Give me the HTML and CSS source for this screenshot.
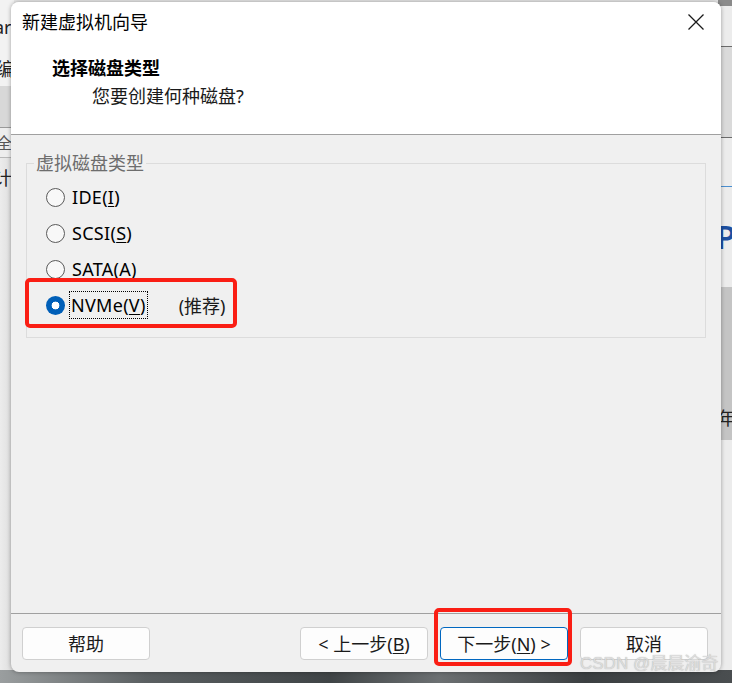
FILE: index.html
```html
<!DOCTYPE html>
<html lang="zh-CN">
<head>
<meta charset="utf-8">
<title>新建虚拟机向导</title>
<link rel="stylesheet" href="styles.css">
</head>
<body>
<div class="desktop">
  <div class="bg-left">
    <div class="bl-top">
      <span class="bl-t1">ar</span>
      <span class="bl-t2">编</span>
    </div>
    <div class="bl-band"></div>
    <div class="bl-row"><span>全</span></div>
    <div class="bl-row2"><span>计</span></div>
  </div>
  <div class="bg-right">
    <div class="br-top"></div>
    <div class="br-lines"></div>
    <div class="br-blue"></div>
    <div class="br-pc">PC</div>
    <div class="br-gray"><span>年</span></div>
  </div>
  <div class="bg-bottom"></div>

  <div class="dialog">
    <div class="header">
      <div class="titlebar">
        <span class="title">新建虚拟机向导</span>
        <svg class="close" width="16" height="16" viewBox="0 0 16 16"><path d="M0.5 0.5 L15.5 15.5 M15.5 0.5 L0.5 15.5" stroke="#1a1a1a" stroke-width="1.3" fill="none"/></svg>
      </div>
      <div class="heading">选择磁盘类型</div>
      <div class="subheading">您要创建何种磁盘?</div>
    </div>
    <div class="body">
      <fieldset class="group">
        <legend>虚拟磁盘类型</legend>
        <div class="radio"><span class="dot"></span><span class="lbl">IDE(<u>I</u>)</span></div>
        <div class="radio"><span class="dot"></span><span class="lbl">SCSI(<u>S</u>)</span></div>
        <div class="radio"><span class="dot"></span><span class="lbl">SATA(<u>A</u>)</span></div>
        <div class="radio checked"><span class="dot"></span><span class="lbl focus">NVMe(<u>V</u>)</span><span class="rec">(推荐)</span></div>
      </fieldset>
    </div>
    <div class="footer">
      <div class="btn">帮助</div>
      <div class="spacer"></div>
      <div class="btn">&lt; 上一步(<u>B</u>)</div>
      <div class="btn primary">下一步(<u>N</u>) &gt;</div>
      <div class="btn">取消</div>
    </div>
  </div>

  <div class="mark mark-nvme"></div>
  <div class="mark mark-next"></div>
  <div class="watermark">CSDN @晨晨渝奇</div>
</div>
</body>
</html>
```

FILE: styles.css
```css
* { box-sizing: border-box; }
html, body { margin: 0; padding: 0; }
body {
  width: 732px;
  height: 683px;
  overflow: hidden;
  font-family: "Noto Sans", "Noto Sans CJK SC", sans-serif;
  font-size: 18px;
  color: #000;
}
.desktop {
  position: relative;
  width: 732px;
  height: 683px;
  background: #e6e6e6;
  overflow: hidden;
}

/* background app, left strip */
.bg-left {
  position: absolute;
  left: 0; top: 0;
  width: 14px; height: 672px;
  background: linear-gradient(to right, #ececec, #dcdcdc);
  display: flex;
  flex-direction: column;
  overflow: hidden;
}
.bl-top {
  height: 86px;
  background: #f2f2f2;
  display: flex;
  flex-direction: column;
  font-size: 18px;
  line-height: 22px;
}
.bl-t1 { margin-top: 16px; margin-left: -6px; color: #222; }
.bl-t2 { margin-top: 20px; margin-left: -4px; color: #222; }
.bl-band { height: 42px; background: #d8d8d8; border-bottom: 1px solid #9a9a9a; }
.bl-row {
  height: 30px;
  border-bottom: 1px solid #b8b8b8;
  background: #ededed;
  font-size: 16px;
  line-height: 30px;
  color: #555;
}
.bl-row span { margin-left: -4px; }
.bl-row2 {
  height: 40px;
  font-size: 18px;
  line-height: 40px;
  color: #222;
}
.bl-row2 span { margin-left: -6px; }

/* right strip */
.bg-right {
  position: absolute;
  left: 718px; top: 0;
  width: 14px; height: 672px;
  background: #ececec;
  overflow: hidden;
}
.br-top { height: 6px; background: #8a8a8a; }
.br-lines {
  height: 92px;
  margin-top: 40px;
  border-top: 1px solid #6b6b6b;
  border-bottom: 1px solid #6b6b6b;
  background: #dadada;
}
.br-blue { height: 1px; background: #4a8fd0; margin-top: 48px; }
.br-pc {
  margin-top: 32px;
  font-size: 32px;
  line-height: 36px;
  color: #1d4fa0;
  margin-left: -2px;
  font-weight: 600;
}
.br-gray {
  margin-top: 32px;
  height: 153px;
  background: #c4c4c4;
  font-size: 18px;
  line-height: 22px;
  padding-top: 120px;
  color: #222;
}
.bg-bottom {
  position: absolute;
  left: 0; top: 670px;
  width: 732px; height: 13px;
  background: linear-gradient(to right, #9a9e9f 0%, #5a5f61 20%, #3f4446 45%, #6c7072 60%, #3b3f41 80%, #4a4e50 100%);
}

/* dialog window */
.dialog {
  position: absolute;
  left: 11px; top: 2px;
  width: 710px; height: 670px;
  background: #f0f0f0;
  border-radius: 8px;
  box-shadow: 0 0 4px rgba(0,0,0,0.35);
  display: flex;
  flex-direction: column;
  overflow: hidden;
}
.header {
  height: 133px;
  background: #fff;
  border-bottom: 1px solid #a0a0a0;
  display: flex;
  flex-direction: column;
}
.titlebar {
  height: 40px;
  display: flex;
  align-items: center;
  padding-left: 11px;
}
.title { flex: 1; line-height: 24px; color: #000; }
.close { margin-right: 17px; }
.heading {
  margin-top: 14px;
  padding-left: 41px;
  line-height: 24px;
  font-weight: 700;
  color: #000;
}
.subheading {
  margin-top: 4px;
  padding-left: 81px;
  line-height: 24px;
  color: #1a1a1a;
}

.body { flex: 1; padding: 18px 15px 0 15px; }
.group {
  margin: 0;
  border: 1px solid #dcdcdc;
  padding: 6px 0 14px 19px;
  min-width: 0;
}
.group legend {
  padding: 0 2px;
  margin-left: -12px;
  line-height: 20px;
  color: #6d6d6d;
}
.radio {
  height: 36px;
  display: flex;
  align-items: center;
}
.dot {
  width: 19px; height: 19px;
  border: 1px solid #5a5a5a;
  border-radius: 50%;
  background: #f8f8f8;
  margin-right: 6px;
  flex: none;
}
.radio.checked .dot {
  border: none;
  background: radial-gradient(circle, #fff 0 3.6px, #005fb8 4.2px);
}
.lbl { line-height: 26px; padding: 0 1px; letter-spacing: 0.3px; }
.lbl u { text-decoration-thickness: 1px; text-underline-offset: 2px; }
.focus { outline: 1px dotted #000; outline-offset: 0; margin-left: -1px; }
.rec { margin-left: 32px; color: #1a1a1a; }

.footer {
  border-top: 1px solid #a0a0a0;
  padding: 13px 13px 12px 11px;
  display: flex;
  gap: 12px;
}
.spacer { flex: 1; }
.btn {
  width: 128px;
  height: 33px;
  background: #fdfdfd;
  border: 1px solid #d0d0d0;
  border-radius: 4px;
  display: flex;
  align-items: center;
  justify-content: center;
  line-height: 24px;
  color: #1a1a1a;
}
.btn u { text-underline-offset: 2px; }
.btn.primary { border-color: #0067c0; }

/* annotations */
.mark {
  position: absolute;
  border: 4px solid #fa1e14;
  border-radius: 5px;
}
.mark-nvme { left: 25px; top: 278px; width: 212px; height: 50px; }
.mark-next { left: 434px; top: 608px; width: 138px; height: 58px; }
.watermark {
  position: absolute;
  left: 580px; top: 653px;
  font-size: 17px;
  line-height: 22px;
  color: rgba(225,225,225,0.9);
  text-shadow: 0 0 1px rgba(120,120,120,0.6);
  font-family: "Liberation Sans", "Noto Sans CJK SC", sans-serif;
}
```
